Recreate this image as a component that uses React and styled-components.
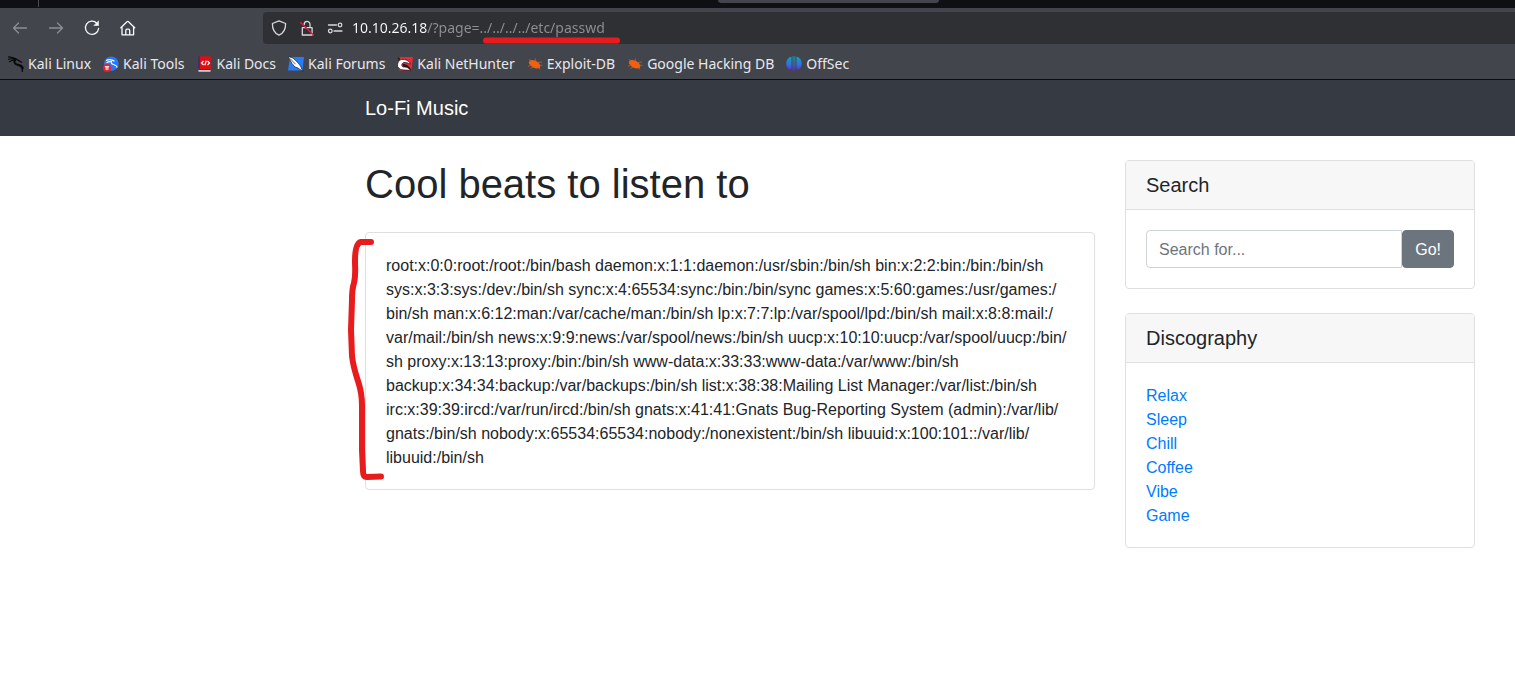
import React from "react";
import styled, { createGlobalStyle } from "styled-components";

const GlobalStyle = createGlobalStyle`
  *, *::before, *::after { box-sizing: border-box; }
  body {
    margin: 0;
    background: #fff;
    color: #212529;
    font-family: "Liberation Sans", Arial, sans-serif;
    font-size: 16px;
    line-height: 24px;
  }
`;

const Browser = styled.header`
  background: #43454c;
  color: #e8e8ec;
  font-family: "Noto Sans", sans-serif;
  border-bottom: 1px solid #0c0c0f;
`;

const TabStrip = styled.div`
  display: flex;
  height: 8px;
  background: #0f1014;
`;

const TabSpacer = styled.div`
  width: 39px;
  height: 7px;
  border-right: 1px solid #4a4b51;
`;

const ActiveTab = styled.div`
  width: 221px;
  height: 3px;
  margin-left: 679px;
  border-radius: 0 0 4px 4px;
  background: #43454c;
`;

const Toolbar = styled.div`
  display: flex;
  align-items: center;
  padding: 4px 0 4px 12px;
`;

const ToolButtons = styled.div`
  display: flex;
  flex: 0 0 251px;
  gap: 20px;
`;

const ToolButton = styled.button`
  display: flex;
  padding: 0;
  border: 0;
  background: none;
  color: #fbfbfe;
  opacity: ${(p) => (p.disabled ? 0.4 : 1)};
`;

const AddressBar = styled.div`
  position: relative;
  display: flex;
  flex: 1;
  align-items: center;
  gap: 12px;
  height: 32px;
  padding-left: 8px;
  border-radius: 4px 0 0 4px;
  background: #2f3034;
  color: #d8d8dc;
`;

const AddressInput = styled.input`
  flex: 1;
  min-width: 0;
  height: 24px;
  margin-left: -3px;
  padding: 0;
  border: 0;
  outline: 0;
  background: linear-gradient(to right, #fbfbfe 75px, #8f8f94 75px);
  background-clip: text;
  color: transparent;
  font: 14px/24px "Noto Sans", sans-serif;
`;

const Underline = styled.svg`
  position: absolute;
  left: 218px;
  top: 24px;
  pointer-events: none;
`;

const Bookmarks = styled.nav`
  display: flex;
  gap: 12px;
  height: 31px;
  padding: 0 8px;
  align-items: center;
`;

const Bookmark = styled.a`
  display: flex;
  align-items: center;
  gap: 4px;
  color: #e8e8ec;
  font-size: 14px;
  line-height: 20px;
  text-decoration: none;
  white-space: nowrap;
`;

const SiteBar = styled.nav`
  display: flex;
  align-items: center;
  height: 56px;
  padding-left: 365px;
  background: #363a42;
`;

const Brand = styled.a`
  color: #fff;
  font-size: 20px;
  line-height: 30px;
  text-decoration: none;
`;

const Container = styled.div`
  display: grid;
  grid-template-columns: minmax(0, 73fr) minmax(0, 35fr);
  gap: 30px;
  align-items: start;
  padding: 24px 40px 24px 365px;
`;

const Title = styled.h1`
  margin: 0 0 24px;
  font-size: 40px;
  font-weight: 400;
  line-height: 48px;
`;

const Card = styled.section`
  position: relative;
  margin-bottom: 24px;
  border: 1px solid #dfdfdf;
  border-radius: 4px;
  background: #fff;
`;

const CardHeader = styled.h2`
  margin: 0;
  padding: 12px 20px;
  border-bottom: 1px solid #dfdfdf;
  border-radius: 3px 3px 0 0;
  background: #f7f7f7;
  font-size: 20px;
  font-weight: 400;
  line-height: 24px;
`;

const CardBody = styled.div`
  padding: ${(p) => (p.$text ? "21px 20px 19px" : "20px")};
`;

const Bracket = styled.svg`
  position: absolute;
  left: -20px;
  top: 3px;
  pointer-events: none;
`;

const SearchForm = styled.form`
  display: flex;
`;

const SearchInput = styled.input`
  flex: 1;
  min-width: 0;
  height: 38px;
  padding: 7px 12px 5px;
  border: 1px solid #ced4da;
  border-radius: 4px 0 0 4px;
  font: 16px/24px "Liberation Sans", Arial, sans-serif;
  &::placeholder { color: #6c757d; opacity: 1; }
`;

const SearchButton = styled.button`
  height: 38px;
  padding: 7px 12px 5px;
  border: 1px solid #6c757d;
  border-radius: 4px;
  background: #6c757d;
  color: #fff;
  font: 16px/24px "Liberation Sans", Arial, sans-serif;
`;

const LinkList = styled.ul`
  margin: 0;
  padding: 0;
  list-style: none;
`;

const GenreLink = styled.a`
  color: #007bff;
  text-decoration: none;
`;

const Line = ({ children }) => (
  <svg width="16" height="16" viewBox="0 0 16 16" fill="none" stroke="currentColor"
    strokeWidth="1.3" strokeLinecap="round" strokeLinejoin="round" aria-hidden="true">
    {children}
  </svg>
);

const BackIcon = () => <Line><path d="M14.5 8H1.500M6.500 3 1.500 8l5 5" /></Line>;
const ForwardIcon = () => <Line><path d="M1.500 8h13M9.500 3l5 5-5 5" /></Line>;
const ReloadIcon = () => (
  <Line>
    <path d="M12.800 3.200A6.600 6.600 0 1 0 14.600 8.500" />
    <path d="M14.500 1.200v4.300h-4.300z" fill="currentColor" strokeWidth="0.600" />
  </Line>
);
const HomeIcon = () => (
  <Line>
    <path d="M.8 7.800 7 1.700c.5-.5 1-.5 1.500 0l6.200 6.100M2 7v7.800h11.600V7M5.800 14.800v-4.300c0-.8.500-1.300 1.200-1.300h1.500c.7 0 1.200.5 1.200 1.300v4.300" />
  </Line>
);
const ShieldIcon = () => (
  <Line><path d="M8 .9 14.600 3.500C14.700 8.500 13 13 8 15.200 3 13 1.300 8.500 1.400 3.500Z" /></Line>
);
const LockOffIcon = () => (
  <Line>
    <path d="M3.300 7.700h9.800V15H3.300zM5.200 4.500a2.900 2.900 0 0 1 5.800-.3v3.500" />
    <path d="M1.500 2.500 14.500 15" stroke="#e2194f" />
  </Line>
);
const PermissionsIcon = () => (
  <Line>
    <path d="M1.500 5h8M7 11h8" />
    <circle cx="13" cy="5" r="1.800" />
    <circle cx="3.300" cy="11" r="1.800" />
  </Line>
);

const Art = ({ children }) => (
  <svg width="16" height="16" viewBox="0 0 16 16" aria-hidden="true">{children}</svg>
);
const DragonIcon = () => (
  <Art>
    <g fill="none" stroke="#08090b" strokeLinecap="round">
      <path d="M.5 .8C4 1 7.500 2 11 4.700M.6 3.300C3 2.500 5.500 2.600 8 3.500M1.500 5.700C3.500 4.300 5.500 4 7.500 4.300" strokeWidth="1.200" />
      <path d="M7.500 3.500C5.600 5.500 6.300 8 9 8.600c3.200.6 5.200 1.400 5.800 3.600" strokeWidth="2" />
      <path d="M10.500 4.500 13.500 6.300M10 9.200c3.500 1 4.600 3 4.300 6.200" strokeWidth="1.300" />
    </g>
  </Art>
);
const ToolsIcon = () => (
  <Art>
    <circle cx="8.300" cy="7.700" r="7.300" fill="#2777ff" />
    <path d="M3 4.500c3-1.300 6-1 8.500.8M3.500 6.800c2-1.300 4-1.300 5.500-.8M8.500 5c-.7 2 .2 3 2 3.500 2.200.5 3.300 1.500 3.800 3" fill="none" stroke="#fff" strokeWidth="1.200" />
    <circle cx="4" cy="12" r="4" fill="#e42229" />
    <path d="M1.800 10.700h4.400M3.200 10.700v3.300M4.900 10.700v3.300" fill="none" stroke="#fff" />
  </Art>
);
const DocsIcon = () => (
  <Art>
    <path d="M1 .3h12.700v13.200H1z" fill="#e20d14" />
    <path d="M1 .3h2v13.200H1z" fill="#40306a" />
    <path d="M1.500 13.500h12v2.200h-12z" fill="#ddd" />
    <path d="M1.500 13h12.200v1.100H1.500z" fill="#a50c14" />
    <path d="m6.500 5-2 2 2 2M10.500 5l2 2-2 2M9.300 4.800 7.800 9.300" fill="none" stroke="#fff" strokeWidth="1.200" />
  </Art>
);
const ForumsIcon = () => (
  <Art>
    <path d="M2 1h14l-1.500 13.500H0z" fill="#267cf8" />
    <path d="M0 .5 5 2l5 4.700 2.500 3.300 2.300 5.500-4.800-3.500-3-1-3-3.500z" fill="#fff" stroke="#14202f" strokeWidth=".7" />
    <path d="m2 2.500 5.500 5.700" stroke="#14202f" strokeWidth=".7" />
  </Art>
);
const NetHunterIcon = () => (
  <Art>
    <path d="M3 1h13l-1.500 13.500H2z" fill="#ed2630" />
    <path d="M.3 1.300 3.500 3 2 5ZM5.500 8.500c2.500-1.500 6 .5 9 5.500l-7-1.500Z" fill="#251922" />
    <path d="M.6 10.500C0 5 3.500 2.800 7.500 3.500c3 .6 5.500 2.500 5.900 4.700-1.900-1-4.900-2.200-6.700-1.600C4.200 7.500 4.300 10.500 6.500 11c2.200.2 4-.5 7.500 3.800-4.500-1.800-10.500 1.300-13.400-4.300Z" fill="#fff" stroke="#251922" strokeWidth=".8" />
  </Art>
);
const BugIcon = () => (
  <Art>
    <path d="M2 5.500C3.500 3.300 7.500 3.700 10.500 6c2.300 1.700 3.500 4 2.500 5.700-2.500 1.500-6.700.7-9-1.700C2.300 8.500 1.500 6.800 2 5.500Z" fill="#f06010" />
    <path d="m4 6-1.500-3M8 5 8.500 2.500M11 6.500l4-.5M12 9l3.500.5M3.500 9 1 10.500M6 11l-2.500 1.500M12 11.500l1 2" stroke="#b96238" strokeWidth=".8" />
  </Art>
);
const OffSecIcon = () => (
  <Art>
    <defs>
      <linearGradient id="offsec" x1="0" y1="0" x2="0" y2="1">
        <stop offset="0" stopColor="#0ba9b5" />
        <stop offset=".55" stopColor="#346ee0" />
        <stop offset="1" stopColor="#6618c8" />
      </linearGradient>
    </defs>
    <path d="M5.500.8v11.700L3.300 13.700C1.300 12.300.3 10.200.3 7.500.3 4 2.300 1.400 5.500.8ZM10.500.8v11.700l2.200 1.200c2-1.400 3-3.500 3-6.200 0-3.500-2-6.100-5.200-6.700ZM6.600.3h1v15.500l-1-1ZM8.400.3h1v14.500l-1 1Z" fill="url(#offsec)" />
  </Art>
);

const bookmarks = [
  ["Kali Linux", DragonIcon],
  ["Kali Tools", ToolsIcon],
  ["Kali Docs", DocsIcon],
  ["Kali Forums", ForumsIcon],
  ["Kali NetHunter", NetHunterIcon],
  ["Exploit-DB", BugIcon],
  ["Google Hacking DB", BugIcon],
  ["OffSec", OffSecIcon],
];

const genres = ["Relax", "Sleep", "Chill", "Coffee", "Vibe", "Game"];

const passwd = [
  "root:x:0:0:root:/root:/bin/bash",
  "daemon:x:1:1:daemon:/usr/sbin:/bin/sh",
  "bin:x:2:2:bin:/bin:/bin/sh",
  "sys:x:3:3:sys:/dev:/bin/sh",
  "sync:x:4:65534:sync:/bin:/bin/sync",
  "games:x:5:60:games:/usr/games:/bin/sh",
  "man:x:6:12:man:/var/cache/man:/bin/sh",
  "lp:x:7:7:lp:/var/spool/lpd:/bin/sh",
  "mail:x:8:8:mail:/var/mail:/bin/sh",
  "news:x:9:9:news:/var/spool/news:/bin/sh",
  "uucp:x:10:10:uucp:/var/spool/uucp:/bin/sh",
  "proxy:x:13:13:proxy:/bin:/bin/sh",
  "www-data:x:33:33:www-data:/var/www:/bin/sh",
  "backup:x:34:34:backup:/var/backups:/bin/sh",
  "list:x:38:38:Mailing List Manager:/var/list:/bin/sh",
  "irc:x:39:39:ircd:/var/run/ircd:/bin/sh",
  "gnats:x:41:41:Gnats Bug-Reporting System (admin):/var/lib/gnats:/bin/sh",
  "nobody:x:65534:65534:nobody:/nonexistent:/bin/sh",
  "libuuid:x:100:101::/var/lib/libuuid:/bin/sh",
].join(" ");

// A zero-width space after each slash lets long paths wrap there.
const breakable = (text) => text.replaceAll("/", "/\u200b");

export default function App() {
  return (
    <>
      <GlobalStyle />
      <Browser>
        <TabStrip>
          <TabSpacer />
          <ActiveTab />
        </TabStrip>
        <Toolbar>
          <ToolButtons>
            <ToolButton type="button" aria-label="Back" disabled><BackIcon /></ToolButton>
            <ToolButton type="button" aria-label="Forward" disabled><ForwardIcon /></ToolButton>
            <ToolButton type="button" aria-label="Reload"><ReloadIcon /></ToolButton>
            <ToolButton type="button" aria-label="Home"><HomeIcon /></ToolButton>
          </ToolButtons>
          <AddressBar>
            <ShieldIcon />
            <LockOffIcon />
            <PermissionsIcon />
            <AddressInput aria-label="Address" defaultValue="10.10.26.18/?page=../../../../etc/passwd" />
            <Underline width="140" height="8" aria-hidden="true">
              <path d="M5 4.500H136" stroke="#e81c1c" strokeWidth="6" strokeLinecap="round" />
            </Underline>
          </AddressBar>
        </Toolbar>
        <Bookmarks aria-label="Bookmarks">
          {bookmarks.map(([label, Icon]) => (
            <Bookmark href="#" key={label}><Icon />{label}</Bookmark>
          ))}
        </Bookmarks>
      </Browser>
      <SiteBar>
        <Brand href="#">Lo-Fi Music</Brand>
      </SiteBar>
      <Container>
        <main>
          <Title>Cool beats to listen to</Title>
          <Card>
            <CardBody $text>{breakable(passwd)}</CardBody>
            <Bracket width="44" height="248" viewBox="346 236 44 248" aria-hidden="true">
              <path d="M371 242H361C356 243 355 253 355 261C355 269 356 275 354 283C352 289 352 294 352 300L351 330L352 356C353 365 356 375 358 381C361 390 362 396 362 405V450L363 471C363 475 364 477 367 477L381 476.500"
                fill="none" stroke="#e81c1c" strokeWidth="6" strokeLinecap="round" strokeLinejoin="round" />
            </Bracket>
          </Card>
        </main>
        <aside>
          <Card>
            <CardHeader>Search</CardHeader>
            <CardBody>
              <SearchForm onSubmit={(e) => e.preventDefault()}>
                <SearchInput aria-label="Search" placeholder="Search for..." />
                <SearchButton type="submit">Go!</SearchButton>
              </SearchForm>
            </CardBody>
          </Card>
          <Card>
            <CardHeader>Discography</CardHeader>
            <CardBody $text>
              <LinkList>
                {genres.map((g) => (
                  <li key={g}><GenreLink href="#">{g}</GenreLink></li>
                ))}
              </LinkList>
            </CardBody>
          </Card>
        </aside>
      </Container>
    </>
  );
}
